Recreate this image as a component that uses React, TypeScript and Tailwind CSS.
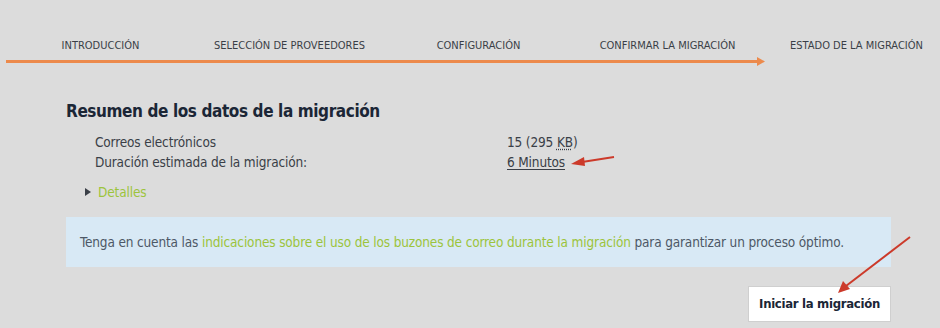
import React from "react";

const steps = [
  "INTRODUCCIÓN",
  "SELECCIÓN DE PROVEEDORES",
  "CONFIGURACIÓN",
  "CONFIRMAR LA MIGRACIÓN",
  "ESTADO DE LA MIGRACIÓN",
];

// ---------------------------------------------------------------------------
// Barra dei passi
// ---------------------------------------------------------------------------
function Steps() {
  return (
    <div className="pt-[37px]">
      <div className="flex ml-[6px]">
        {steps.map((s) => (
          <div
            key={s}
            className="w-[189px] shrink-0 text-center text-[11px] leading-[18px] text-[#3a3f47]">
            {s}
          </div>
        ))}
      </div>
      <div className="ml-[6px] mt-[2px] flex items-center w-[759px]">
        <div className="h-[3px] flex-1 bg-[#ec8a4c]" />
        <svg width="8" height="9" viewBox="0 0 8 9" className="-ml-px">
          <path d="M0 0 L8 4.5 L0 9 Z" fill="#ec8a4c" />
        </svg>
      </div>
    </div>
  );
}

export default function App() {
  return (
    <div
      className="relative w-[940px] h-[328px] overflow-hidden bg-[#dcdcdc]"
      style={{ fontFamily: '"Liberation Sans Narrow", "DejaVu Sans Condensed", "Liberation Sans", sans-serif' }}>
      <Steps />

      <div className="pl-[66px] w-[891px]">
        <h2 className="mt-[33px] text-[17px] leading-[24px] font-bold tracking-[-0.4px] text-[#1b2636]">
          Resumen de los datos de la migración
        </h2>

        <div className="mt-[9px] pl-[29px] text-[13.5px] leading-[20px] tracking-[-0.15px] text-[#3a3f47]">
          <div className="flex">
            <span className="w-[412px]">Correos electrónicos</span>
            <span>
              15 (295{" "}
              <abbr className="underline decoration-dotted underline-offset-2">KB</abbr>)
            </span>
          </div>
          <div className="flex">
            <span className="w-[412px]">Duración estimada de la migración:</span>
            <span className="underline underline-offset-2">6 Minutos</span>
          </div>
        </div>

        <div className="mt-[10px] pl-[19px] flex items-center gap-[7px] text-[13.5px] leading-[20px] tracking-[-0.15px]">
          <svg width="6" height="8" viewBox="0 0 6 8">
            <path d="M0 0 L6 4 L0 8 Z" fill="#3a3f47" />
          </svg>
          <span className="text-[#9cc43c]">Detalles</span>
        </div>

        <div className="mt-[15px] h-[50px] bg-[#d8e9f5] pl-[14px] flex items-center text-[13.5px] tracking-[-0.15px] text-[#4d5866] whitespace-nowrap">
          <p>
            Tenga en cuenta las{" "}
            <span className="text-[#9cc43c]">
              indicaciones sobre el uso de los buzones de correo durante la migración
            </span>{" "}
            para garantizar un proceso óptimo.
          </p>
        </div>

        <div className="mt-[19px] flex justify-end">
          <button className="w-[143px] h-[36px] bg-white border border-[#cfcfcf] text-[13px] font-bold tracking-[-0.3px] whitespace-nowrap text-[#1b2636]">
            Iniciar la migración
          </button>
        </div>
      </div>

      {/* frecce di annotazione */}
      <svg className="absolute inset-0 pointer-events-none" width="940" height="328">
        <line x1="614" y1="157" x2="582" y2="162" stroke="#cc3a2a" strokeWidth="2" />
        <path d="M571 164 L584 157 L585 166 Z" fill="#cc3a2a" />
        <line x1="910" y1="237" x2="846" y2="286" stroke="#cc3a2a" strokeWidth="2" />
        <path d="M838 293 L843 281 L850 289 Z" fill="#cc3a2a" />
      </svg>
    </div>
  );
}
